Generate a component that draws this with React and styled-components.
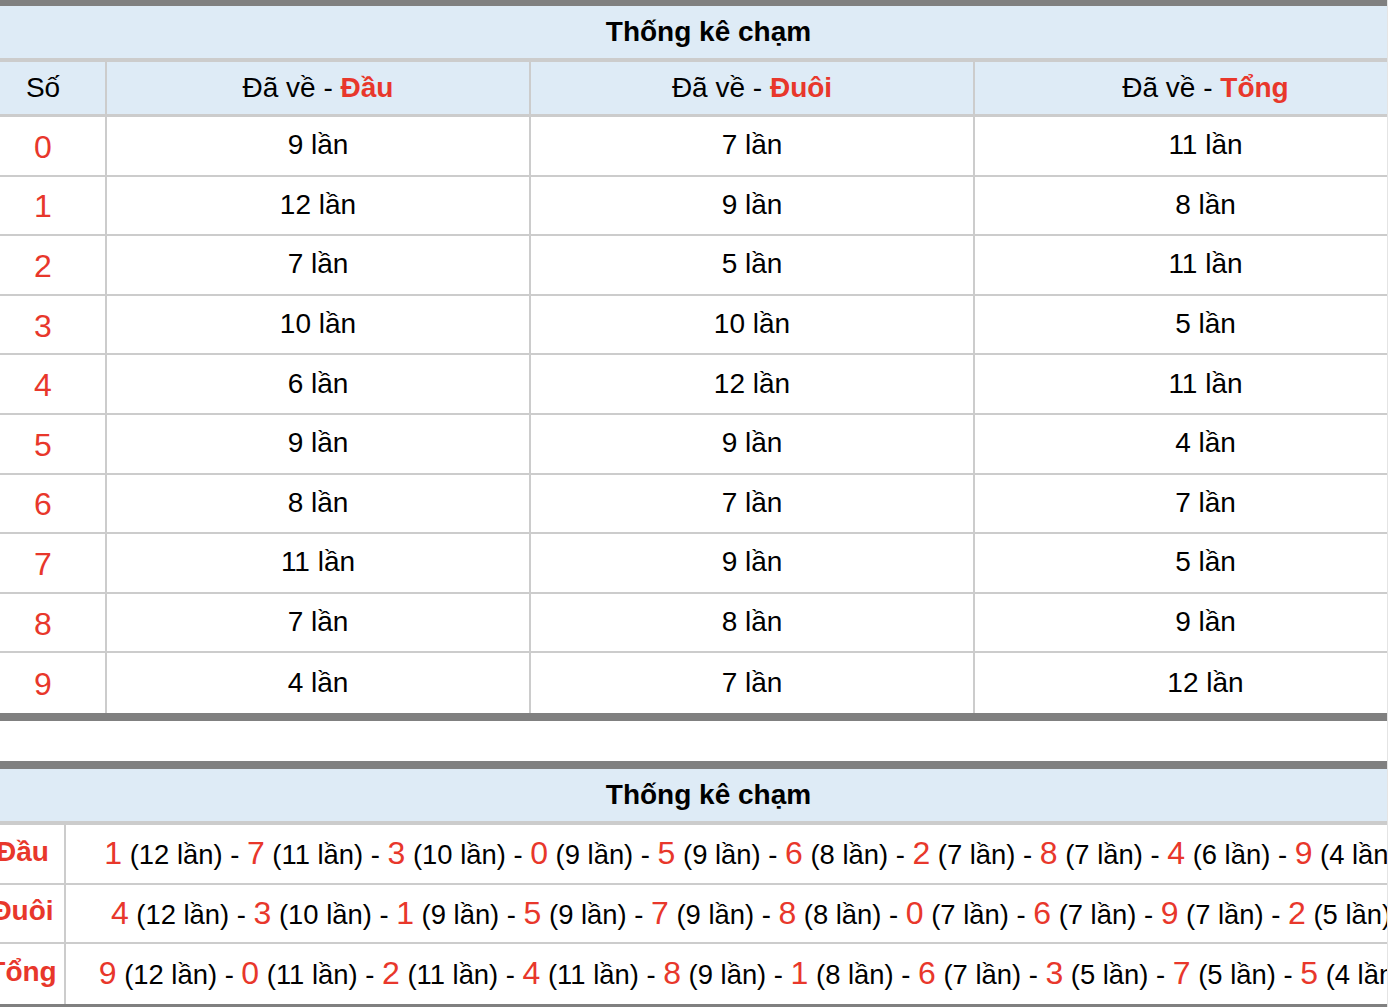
import styled, { createGlobalStyle } from "styled-components";

const RED = "#e8372b";
const LINE = "#cccccc";
const HEAD_BG = "#deebf6";

const dau = [9, 12, 7, 10, 6, 9, 8, 11, 7, 4];
const duoi = [7, 9, 5, 10, 12, 9, 7, 9, 8, 7];
const tong = [11, 8, 11, 5, 11, 4, 7, 5, 9, 12];

const ranked = (counts) =>
  counts
    .map((count, digit) => ({ digit, count }))
    .sort((a, b) => b.count - a.count || a.digit - b.digit);

const GlobalStyle = createGlobalStyle`
  html, body {
    margin: 0;
    padding: 0;
    background: #fff;
    overflow: hidden;
  }
  body {
    font-family: "Liberation Sans", Arial, Helvetica, sans-serif;
    color: #000;
  }
`;

const Viewport = styled.div`
  width: 1388px;
  height: 1007px;
  box-sizing: border-box;
  border-right: 1px solid #e4e4e4;
  overflow: hidden;
`;

// page is scrolled sideways a little, so the tables start left of the edge
const Scroller = styled.div`
  margin-left: -19px;
  width: 1455px;
`;

const Block = styled.div`
  border-top: ${(p) => p.$top || 8}px solid #808080;
  border-bottom: 8px solid #808080;
  margin-bottom: 40px;
`;

const Table = styled.table`
  width: 100%;
  table-layout: fixed;
  border-collapse: separate;
  border-spacing: 0;
`;

const Caption = styled.th`
  box-sizing: border-box;
  height: 56px;
  padding: 0;
  background: ${HEAD_BG};
  border-bottom: 4px solid ${LINE};
  font-size: 28px;
  font-weight: bold;
  text-align: center;
  white-space: nowrap;
`;

const HeadCell = styled.th`
  box-sizing: border-box;
  height: 55px;
  padding: 0;
  background: ${HEAD_BG};
  border-bottom: 3px solid ${LINE};
  border-right: ${(p) => (p.$last ? "none" : `2px solid ${LINE}`)};
  font-size: 28px;
  font-weight: normal;
  text-align: center;
  white-space: nowrap;
`;

const Accent = styled.b`
  color: ${RED};
`;

const Row = styled.tr`
  & > td {
    border-bottom: 2px solid ${LINE};
  }
  &:last-child > td {
    border-bottom: none;
  }
`;

const Cell = styled.td`
  box-sizing: border-box;
  height: 59.6px;
  padding: ${(p) => (p.$num ? "3px 0 0" : "0 0 1px")};
  border-right: ${(p) => (p.$last ? "none" : `2px solid ${LINE}`)};
  font-size: ${(p) => (p.$num ? 32 : 28)}px;
  color: ${(p) => (p.$num ? RED : "#000")};
  text-align: center;
  vertical-align: middle;
  white-space: nowrap;
`;

const Label = styled.td`
  box-sizing: border-box;
  height: 59.6px;
  padding: 0 0 4px;
  border-right: 2px solid ${LINE};
  font-size: 28px;
  font-weight: bold;
  color: ${RED};
  text-align: center;
  vertical-align: middle;
  white-space: nowrap;
`;

const Ranking = styled.td`
  box-sizing: border-box;
  height: 59.6px;
  padding: 0;
  font-size: 27.4px;
  text-align: center;
  vertical-align: middle;
  white-space: nowrap;
`;

const Digit = styled.span`
  color: ${RED};
  font-size: 32px;
`;

const CountTable = () => (
  <Block $top={6}>
    <Table>
      <colgroup>
        <col style={{ width: 126 }} />
        <col style={{ width: 424 }} />
        <col style={{ width: 444 }} />
        <col style={{ width: 461 }} />
      </colgroup>
      <thead>
        <tr>
          <Caption colSpan={4}>Thống kê chạm</Caption>
        </tr>
        <tr>
          <HeadCell>Số</HeadCell>
          <HeadCell>
            Đã về - <Accent>Đầu</Accent>
          </HeadCell>
          <HeadCell>
            Đã về - <Accent>Đuôi</Accent>
          </HeadCell>
          <HeadCell $last>
            Đã về - <Accent>Tổng</Accent>
          </HeadCell>
        </tr>
      </thead>
      <tbody>
        {dau.map((_, i) => (
          <Row key={i}>
            <Cell $num>{i}</Cell>
            <Cell>{dau[i]} lần</Cell>
            <Cell>{duoi[i]} lần</Cell>
            <Cell $last>{tong[i]} lần</Cell>
          </Row>
        ))}
      </tbody>
    </Table>
  </Block>
);

const rankRows = [
  { label: "Đầu", counts: dau },
  { label: "Đuôi", counts: duoi },
  { label: "Tổng", counts: tong },
];

const RankTable = () => (
  <Block>
    <Table>
      <colgroup>
        <col style={{ width: 85 }} />
        <col />
      </colgroup>
      <thead>
        <tr>
          <Caption colSpan={2}>Thống kê chạm</Caption>
        </tr>
      </thead>
      <tbody>
        {rankRows.map((r) => (
          <Row key={r.label}>
            <Label>{r.label}</Label>
            <Ranking>
              {ranked(r.counts).map((e, i) => (
                <span key={e.digit}>
                  {i > 0 && " - "}
                  <Digit>{e.digit}</Digit> ({e.count} lần)
                </span>
              ))}
            </Ranking>
          </Row>
        ))}
      </tbody>
    </Table>
  </Block>
);

export default function App() {
  return (
    <>
      <GlobalStyle />
      <Viewport>
        <Scroller>
          <CountTable />
          <RankTable />
        </Scroller>
      </Viewport>
    </>
  );
}
